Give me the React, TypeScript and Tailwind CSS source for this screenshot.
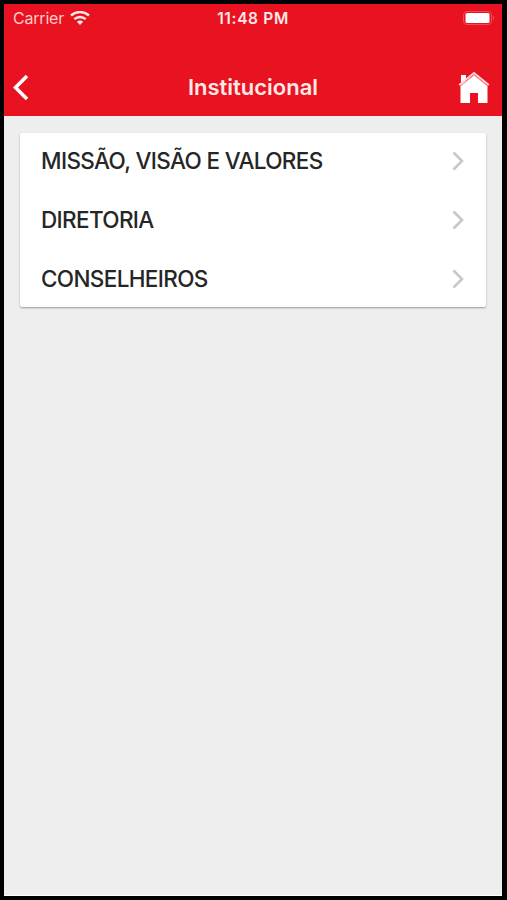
import React from 'react';

const menuItems = [
    { id: 'missao', label: 'MISSÃO, VISÃO E VALORES' },
    { id: 'diretoria', label: 'DIRETORIA' },
    { id: 'conselheiros', label: 'CONSELHEIROS' },
];

const WifiIcon: React.FC = () => (
    <svg width="20" height="15" viewBox="0 0 20 15" fill="none" stroke="#ffe9e7" strokeWidth="2.5">
        <path d="M1 4.5C6.2 -0.1 13.8 -0.1 19 4.5" />
        <path d="M4.3 8.2C7.6 5.2 12.4 5.2 15.7 8.2" />
        <path d="M10 14L6.9 10.8C8.7 9.2 11.3 9.2 13.1 10.8Z" fill="#ffe9e7" stroke="none" />
    </svg>
);

const BatteryIcon: React.FC = () => (
    <svg width="32" height="14" viewBox="0 0 32 14">
        <rect x="0.5" y="0.5" width="28" height="13" rx="3.5" fill="none" stroke="#f04a55" />
        <rect x="2.5" y="2" width="24" height="10" rx="1.5" fill="#fff" />
        <path d="M30 4.5C31.6 5.4 31.6 8.6 30 9.5Z" fill="#f04a55" />
    </svg>
);

const HomeIcon: React.FC = () => (
    <svg width="32" height="32" viewBox="0 0 32 32">
        <path d="M3 4H8V10L3 14Z" fill="#fff" />
        <path d="M2.5 15L16 4L29.5 15V32H20V22H12V32H2.5Z" fill="#fff" />
        <path d="M1.2 14L16 2L30.8 14" fill="none" stroke="#ffd5d6" strokeWidth="2" />
        <path d="M2.5 15L16 4.2L29.5 15" fill="none" stroke="#f7a0a5" strokeWidth="0.9" />
    </svg>
);

const Chevron: React.FC = () => (
    <svg width="12" height="20" viewBox="0 0 12 20" fill="none" stroke="#c7c7cb" strokeWidth="2.6">
        <path d="M1.5 1.5L10 10L1.5 18.5" />
    </svg>
);

export default function App() {
    return (
        <div className="h-[900px] w-[507px] bg-black pt-1 pr-[5px] pb-1 pl-1 font-['Inter',sans-serif]">
            <div className="flex h-full flex-col border-b border-white bg-[#eeeeee]">
                <header className="h-[112px] shrink-0 bg-[#e91220] text-[#ffe9e7]">
                    {/* Status bar */}
                    <div className="grid h-7 grid-cols-3 items-center pr-[7px] pl-[9px]">
                        <div className="flex items-center gap-1.5 text-[16px] text-[#ffc9c9]">
                            <span className="tracking-[-0.2px]">Carrier</span>
                            <WifiIcon />
                        </div>
                        <span className="pt-0.5 pr-0.5 text-center text-[15.5px] font-semibold tracking-[0.65px]">11:48 PM</span>
                        <div className="flex justify-end">
                            <BatteryIcon />
                        </div>
                    </div>

                    {/* Navigation bar */}
                    <div className="grid h-[84px] grid-cols-3 items-center pt-[26px] pr-[12px] pb-0 pl-[9px]">
                        <button className="w-4" aria-label="Voltar">
                            <svg width="16" height="26" viewBox="0 0 16 26" fill="none" stroke="#fff" strokeWidth="3.6">
                                <path d="M14 2L2.5 13.5L14 25" />
                            </svg>
                        </button>
                        <h1 className="pl-[3px] text-center text-[22px] font-semibold">Institucional</h1>
                        <button className="justify-self-end" aria-label="Início">
                            <HomeIcon />
                        </button>
                    </div>
                </header>

                <main className="px-4 pt-[17px]">
                    <ul className="flex flex-col gap-[3px] rounded-[2px] bg-white shadow-[0_1px_2px_rgba(0,0,0,0.35)]">
                        {menuItems.map((item) => (
                            <li key={item.id} className="flex h-14 items-center justify-between pr-[22px] pl-[21px]">
                                <span className="text-[22.5px] font-[450] tracking-[-0.64px] text-[#262626]">{item.label}</span>
                                <Chevron />
                            </li>
                        ))}
                    </ul>
                </main>
            </div>
        </div>
    );
}
